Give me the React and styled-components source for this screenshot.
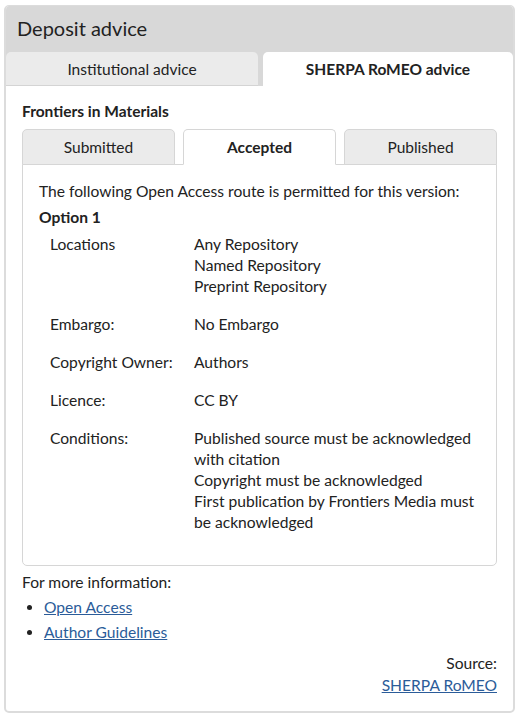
import React from 'react';
import styled, { createGlobalStyle } from 'styled-components';

const GlobalStyle = createGlobalStyle`
  html, body {
    margin: 0;
    padding: 0;
    background: #ffffff;
  }
  body {
    font-family: Lato, "Open Sans", sans-serif;
    color: #222222;
    font-size: 15.6px;
  }
  * { box-sizing: border-box; }
`;

const Panel = styled.div`
  margin: 5px 4px 0 4px;
  width: 511px;
  height: 708px;
  border: 2px solid #dcdcdc;
  border-top-width: 1px;
  border-radius: 5px;
  display: flex;
  flex-direction: column;
  overflow: hidden;
`;

const PanelHead = styled.div`
  background: #d8d8d8;
  padding-top: 11px;
`;

const Title = styled.h2`
  margin: 0 0 0 11px;
  font-size: 20px;
  font-weight: 400;
  line-height: 22px;
  height: 35px;
`;

const TopTabs = styled.div`
  display: flex;
  justify-content: space-between;
`;

const TopTab = styled.div`
  width: ${p => (p.$active ? '250px' : '252px')};
  height: 34px;
  border-radius: 5px 5px 0 0;
  background: ${p => (p.$active ? '#ffffff' : '#ebebeb')};
  border-bottom: ${p => (p.$active ? 'none' : '1px solid #d4d4d4')};
  display: flex;
  align-items: center;
  justify-content: center;
  font-size: 15.5px;
  font-weight: ${p => (p.$active ? 700 : 400)};
`;

const PanelBody = styled.div`
  flex: 1;
  display: flex;
  flex-direction: column;
  padding: 15px 16px 15px 16px;
`;

const Journal = styled.div`
  font-weight: 700;
  font-size: 15.5px;
  line-height: 20px;
  margin-bottom: 8px;
`;

const VersionTabs = styled.div`
  display: flex;
  gap: 8px;
`;

const VersionTab = styled.div`
  flex: 1;
  height: 36px;
  border: 1px solid #d6d6d6;
  border-bottom: 1px solid ${p => (p.$active ? '#ffffff' : '#d6d6d6')};
  border-radius: 5px 5px 0 0;
  background: ${p => (p.$active ? '#ffffff' : '#ebebeb')};
  margin-bottom: -1px;
  position: relative;
  display: flex;
  align-items: center;
  justify-content: center;
  font-size: 15.5px;
  font-weight: ${p => (p.$active ? 700 : 400)};
`;

const VersionBody = styled.div`
  border: 1px solid #d6d6d6;
  border-radius: 0 0 5px 5px;
  padding: 15px 16px 14px 16px;
  height: 402px;
`;

const Intro = styled.p`
  margin: 0 0 4px 0;
  line-height: 22px;
`;

const OptionTitle = styled.div`
  font-weight: 700;
  line-height: 22px;
  margin-bottom: 6px;
`;

const Row = styled.div`
  display: grid;
  grid-template-columns: 144px 1fr;
  padding-left: 11px;
  line-height: 21px;
  margin-bottom: 17px;
`;

const Label = styled.div``;

const Values = styled.div`
  display: flex;
  flex-direction: column;
`;

const MoreInfo = styled.div`
  margin-top: 6px;
  line-height: 20px;
`;

const LinkList = styled.ul`
  margin: 3px 0 0 0;
  padding-left: 22px;
  li {
    line-height: 25px;
  }
`;

const Link = styled.a`
  color: #2b5c99;
  text-decoration: underline;
`;

const Source = styled.div`
  margin-top: auto;
  text-align: right;
  line-height: 22px;
`;

const rows = [
  { label: 'Locations', values: ['Any Repository', 'Named Repository', 'Preprint Repository'] },
  { label: 'Embargo:', values: ['No Embargo'] },
  { label: 'Copyright Owner:', values: ['Authors'] },
  { label: 'Licence:', values: ['CC BY'] },
  {
    label: 'Conditions:',
    values: [
      'Published source must be acknowledged with citation',
      'Copyright must be acknowledged',
      'First publication by Frontiers Media must be acknowledged',
    ],
  },
];

export default function App() {
  return (
    <>
      <GlobalStyle />
      <Panel>
        <PanelHead>
          <Title>Deposit advice</Title>
          <TopTabs>
            <TopTab>Institutional advice</TopTab>
            <TopTab $active>SHERPA RoMEO advice</TopTab>
          </TopTabs>
        </PanelHead>
        <PanelBody>
          <Journal>Frontiers in Materials</Journal>
          <VersionTabs>
            <VersionTab>Submitted</VersionTab>
            <VersionTab $active>Accepted</VersionTab>
            <VersionTab>Published</VersionTab>
          </VersionTabs>
          <VersionBody>
            <Intro>The following Open Access route is permitted for this version:</Intro>
            <OptionTitle>Option 1</OptionTitle>
            {rows.map(r => (
              <Row key={r.label}>
                <Label>{r.label}</Label>
                <Values>
                  {r.values.map(v => (
                    <span key={v}>{v}</span>
                  ))}
                </Values>
              </Row>
            ))}
          </VersionBody>
          <MoreInfo>For more information:</MoreInfo>
          <LinkList>
            <li><Link href="#">Open Access</Link></li>
            <li><Link href="#">Author Guidelines</Link></li>
          </LinkList>
          <Source>
            Source:
            <br />
            <Link href="#">SHERPA RoMEO</Link>
          </Source>
        </PanelBody>
      </Panel>
    </>
  );
}
